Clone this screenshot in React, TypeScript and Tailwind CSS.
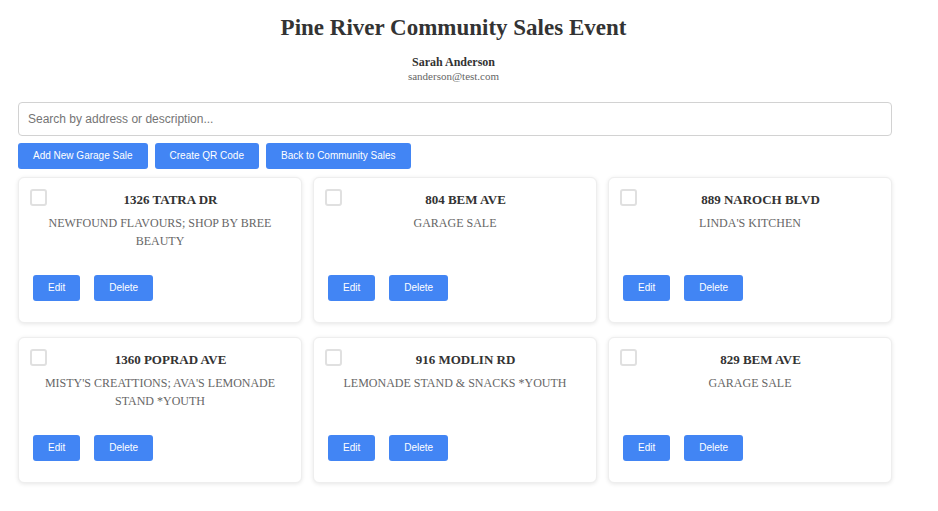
import { useState } from "react";

const sales = [
  { address: "1326 TATRA DR", description: "NEWFOUND FLAVOURS; SHOP BY BREE BEAUTY" },
  { address: "804 BEM AVE", description: "GARAGE SALE" },
  { address: "889 NAROCH BLVD", description: "LINDA'S KITCHEN" },
  { address: "1360 POPRAD AVE", description: "MISTY'S CREATTIONS; AVA'S LEMONADE STAND *YOUTH" },
  { address: "916 MODLIN RD", description: "LEMONADE STAND & SNACKS *YOUTH" },
  { address: "829 BEM AVE", description: "GARAGE SALE" },
];

function Button({ children }: { children: string }) {
  return (
    <button
      type="button"
      className="h-[26px] rounded-[3px] bg-[#4285f4] px-[15px] font-['Liberation_Sans',Arial,sans-serif] text-[10px] leading-[14px] text-white hover:bg-[#3574e2]"
    >
      {children}
    </button>
  );
}

function SaleCard({ address, description }: { address: string; description: string }) {
  return (
    <li className="flex min-h-[146px] flex-col rounded-md border border-[#eeeeee] bg-white px-[11px] pt-[11px] pb-[21px] shadow-[0_1px_4px_rgba(0,0,0,0.1)]">
      <div className="flex items-start">
        <input
          type="checkbox"
          aria-label={`Select ${address}`}
          className="size-[17px] shrink-0 appearance-none rounded-[3px] border-2 border-[#e0e0e0] bg-white checked:border-[#4285f4] checked:bg-[#4285f4]"
        />
        <h2 className="grow pt-[2px] pl-1 text-center text-[13px] leading-[18px] font-bold text-[#333333]">{address}</h2>
      </div>
      <p className="mt-[5px] px-[14px] text-center text-[12px] leading-[18px] text-[#666666]">{description}</p>
      <div className="mt-auto flex gap-[14px] pl-[3px]">
        <Button>Edit</Button>
        <Button>Delete</Button>
      </div>
    </li>
  );
}

export default function App() {
  const [query, setQuery] = useState("");
  const needle = query.toLowerCase();
  const visible = sales.filter((s) => `${s.address} ${s.description}`.toLowerCase().includes(needle));

  return (
    <main className="min-h-screen bg-white pr-[46px] pl-[18px] font-['Liberation_Serif','Times_New_Roman',serif]">
      <header className="pt-[14px] pr-[3px] text-center">
        <h1 className="text-[23px] leading-7 font-bold text-[#333333]">Pine River Community Sales Event</h1>
        <p className="mt-[13px] text-[12px] leading-[14px] font-bold text-[#333333]">Sarah Anderson</p>
        <p className="text-[11px] leading-[14px] text-[#666666]">sanderson@test.com</p>
      </header>
      <input
        type="text"
        aria-label="Search sales"
        value={query}
        onChange={(e) => setQuery(e.target.value)}
        placeholder="Search by address or description..."
        className="mt-[19px] block h-[34px] w-full rounded-[4px] border border-[#d2d2d2] px-[9px] font-['Liberation_Sans',Arial,sans-serif] text-[12px] text-[#333333] placeholder:text-[#757575]"
      />
      <div className="mt-[7px] flex flex-wrap gap-[7px]">
        <Button>Add New Garage Sale</Button>
        <Button>Create QR Code</Button>
        <Button>Back to Community Sales</Button>
      </div>
      <ul className="mt-[8px] grid grid-cols-3 gap-x-[11px] gap-y-[14px]">
        {visible.map((s) => (
          <SaleCard key={s.address} {...s} />
        ))}
      </ul>
    </main>
  );
}
